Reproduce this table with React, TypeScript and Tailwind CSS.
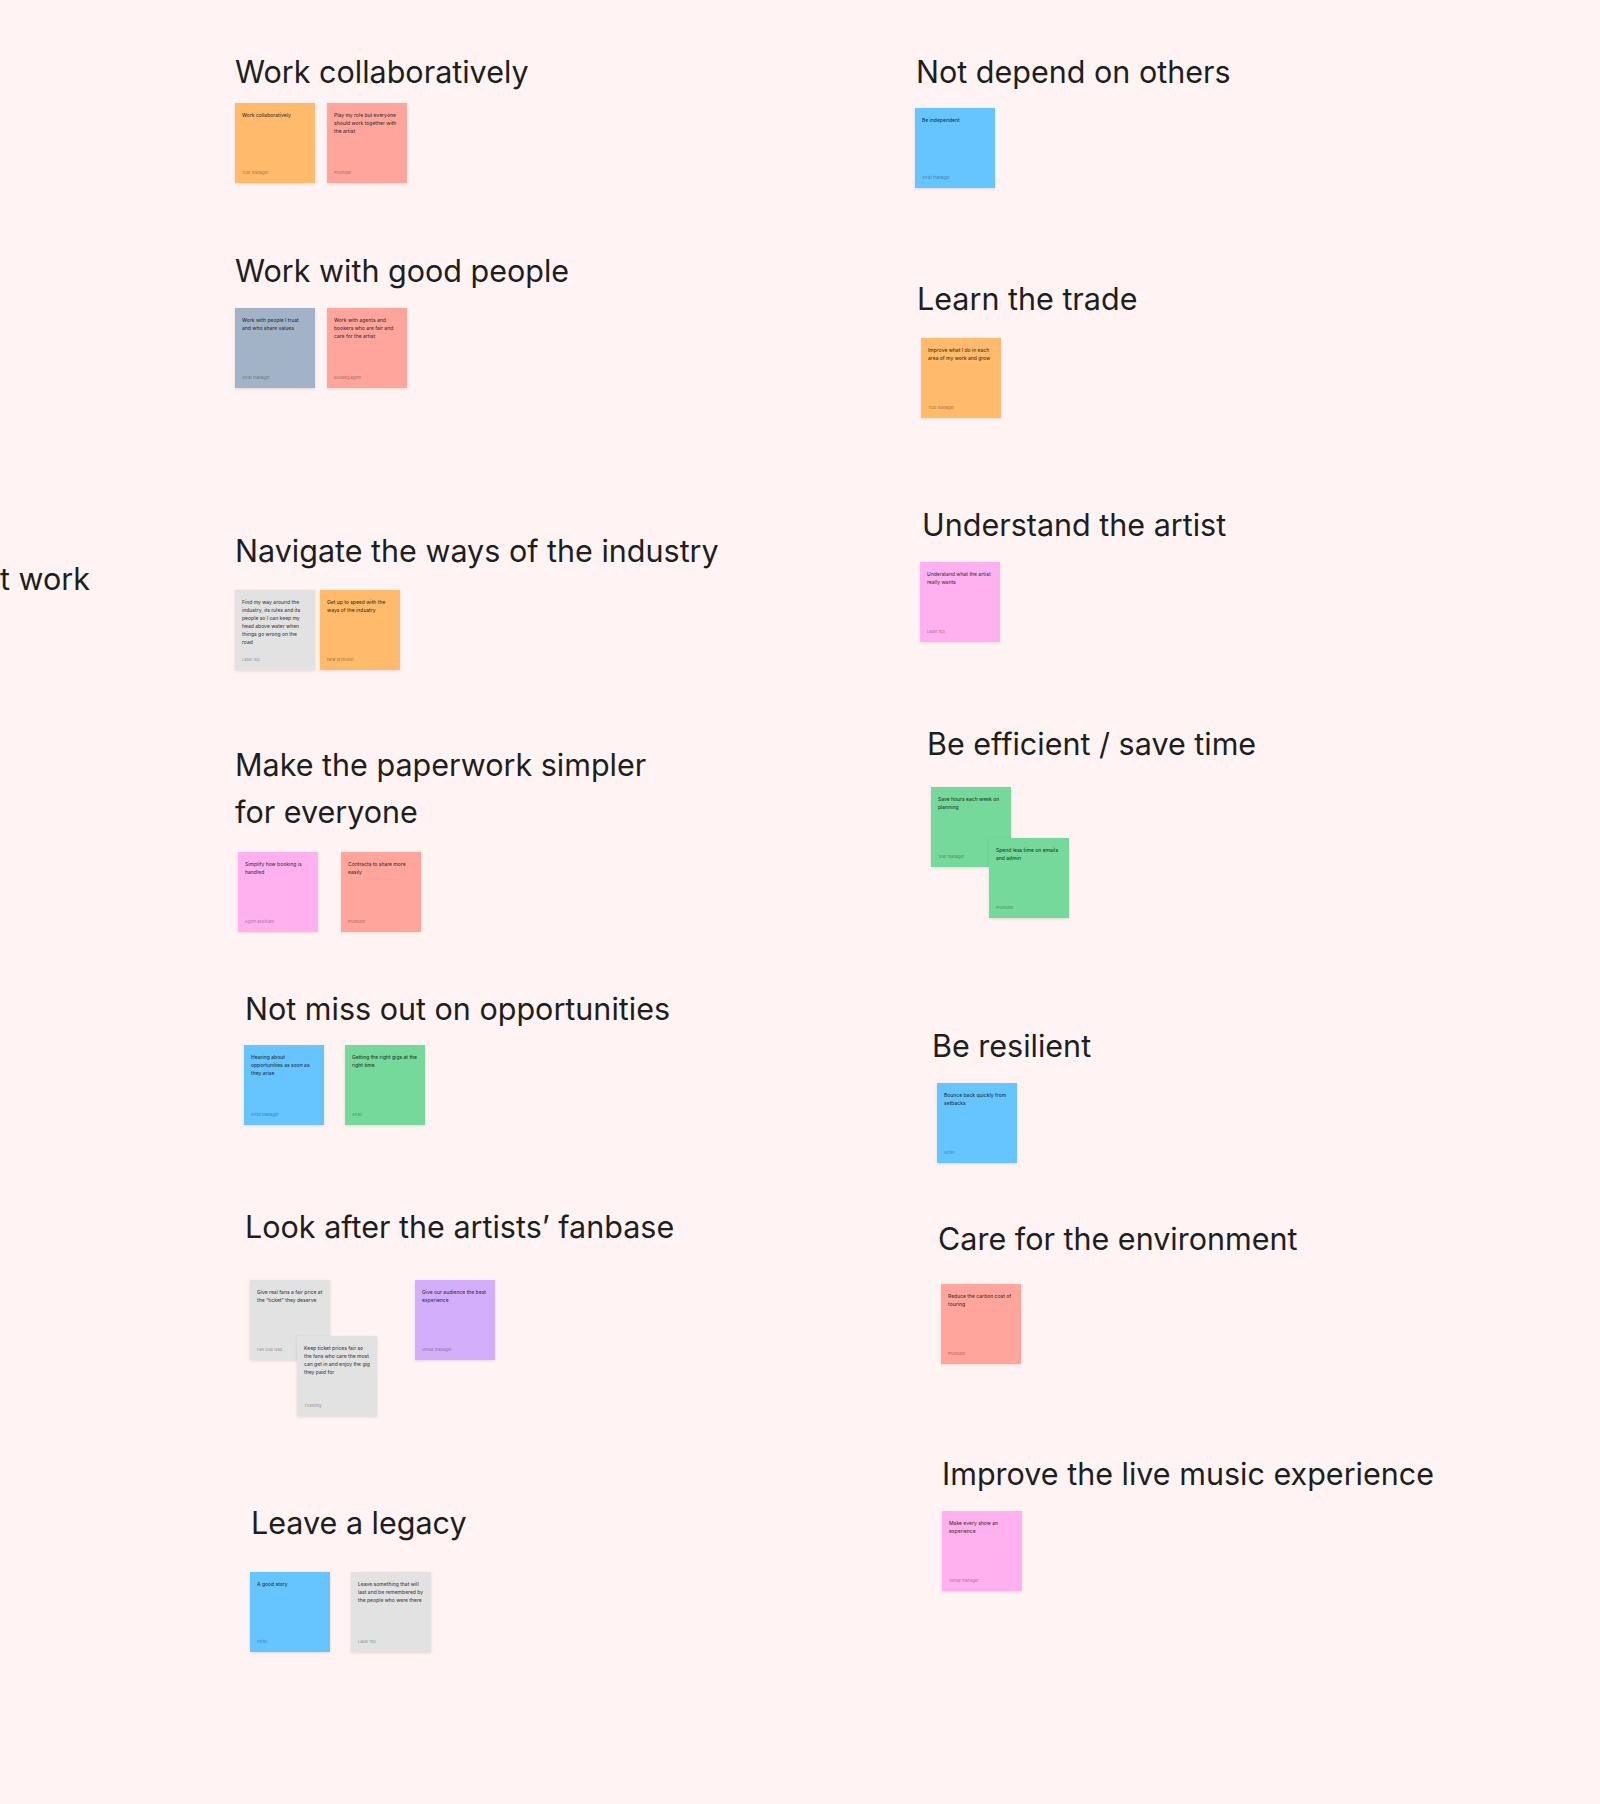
type Sticky = {
  color: string
  text: string
  author: string
  offset?: string
}

type Group = {
  pos: string
  title: string
  titleClass?: string
  cards: string
  stickies: Sticky[]
}

const groups: Group[] = [
  // left column
  {
    pos: 'left-[235px] top-[54px]',
    title: 'Work collaboratively',
    cards: 'mt-[13px] gap-[12px]',
    stickies: [
      { color: 'bg-[#ffba6b]', text: 'Work collaboratively', author: 'Tour manager' },
      { color: 'bg-[#ffa59b]', text: 'Play my role but everyone should work together with the artist', author: 'Promoter' },
    ],
  },
  {
    pos: 'left-[235px] top-[253px]',
    title: 'Work with good people',
    cards: 'mt-[19px] gap-[12px]',
    stickies: [
      { color: 'bg-[#a3b3c7]', text: 'Work with people I trust and who share values', author: 'Artist manager' },
      { color: 'bg-[#ffa59b]', text: 'Work with agents and bookers who are fair and care for the artist', author: 'Booking agent' },
    ],
  },
  {
    pos: 'left-[235px] top-[533px]',
    title: 'Navigate the ways of the industry',
    cards: 'mt-[21px] gap-[5px]',
    stickies: [
      { color: 'bg-[#e2e2e2]', text: 'Find my way around the industry, its rules and its people so I can keep my head above water when things go wrong on the road', author: 'Label rep' },
      { color: 'bg-[#ffba6b]', text: 'Get up to speed with the ways of the industry', author: 'New promoter' },
    ],
  },
  {
    pos: 'left-[235px] top-[741px]',
    title: 'Make the paperwork simpler for everyone',
    titleClass: 'w-[430px] leading-[47px]',
    cards: 'mt-[17px] ml-[3px] gap-[23px]',
    stickies: [
      { color: 'bg-[#ffb0ef]', text: 'Simplify how booking is handled', author: 'Agent assistant' },
      { color: 'bg-[#ffa59b]', text: 'Contracts to share more easily', author: 'Promoter' },
    ],
  },
  {
    pos: 'left-[245px] top-[991px]',
    title: 'Not miss out on opportunities',
    cards: 'mt-[18px] -ml-[1px] gap-[21px]',
    stickies: [
      { color: 'bg-[#66c4ff]', text: 'Hearing about opportunities as soon as they arise', author: 'Artist manager' },
      { color: 'bg-[#75d99b]', text: 'Getting the right gigs at the right time', author: 'Artist' },
    ],
  },
  {
    pos: 'left-[245px] top-[1209px]',
    title: 'Look after the artists’ fanbase',
    cards: 'mt-[35px] ml-[5px]',
    stickies: [
      { color: 'bg-[#e2e2e2]', text: 'Give real fans a fair price at the “ticket” they deserve', author: 'Fan club lead' },
      { color: 'bg-[#e2e2e2]', text: 'Keep ticket prices fair so the fans who care the most can get in and enjoy the gig they paid for', author: 'Ticketing', offset: '-ml-[33px] mt-[56px]' },
      { color: 'bg-[#d3affb]', text: 'Give our audience the best experience', author: 'Venue manager', offset: 'ml-[38px]' },
    ],
  },
  {
    pos: 'left-[251px] top-[1505px]',
    title: 'Leave a legacy',
    cards: 'mt-[31px] -ml-[1px] gap-[21px]',
    stickies: [
      { color: 'bg-[#66c4ff]', text: 'A good story', author: 'Artist' },
      { color: 'bg-[#e2e2e2]', text: 'Leave something that will last and be remembered by the people who were there', author: 'Label rep' },
    ],
  },
  // right column
  {
    pos: 'left-[916px] top-[54px]',
    title: 'Not depend on others',
    cards: 'mt-[18px] -ml-[1px]',
    stickies: [{ color: 'bg-[#66c4ff]', text: 'Be independent', author: 'Artist manager' }],
  },
  {
    pos: 'left-[917px] top-[281px]',
    title: 'Learn the trade',
    cards: 'mt-[21px] ml-[4px]',
    stickies: [{ color: 'bg-[#ffba6b]', text: 'Improve what I do in each area of my work and grow', author: 'Tour manager' }],
  },
  {
    pos: 'left-[922px] top-[507px]',
    title: 'Understand the artist',
    cards: 'mt-[19px] -ml-[2px]',
    stickies: [{ color: 'bg-[#ffb0ef]', text: 'Understand what the artist really wants', author: 'Label rep' }],
  },
  {
    pos: 'left-[927px] top-[726px]',
    title: 'Be efficient / save time',
    cards: 'mt-[25px] ml-[4px]',
    stickies: [
      { color: 'bg-[#75d99b]', text: 'Save hours each week on planning', author: 'Tour manager' },
      { color: 'bg-[#75d99b]', text: 'Spend less time on emails and admin', author: 'Promoter', offset: '-ml-[22px] mt-[51px]' },
    ],
  },
  {
    pos: 'left-[932px] top-[1028px]',
    title: 'Be resilient',
    cards: 'mt-[19px] ml-[5px]',
    stickies: [{ color: 'bg-[#66c4ff]', text: 'Bounce back quickly from setbacks', author: 'Artist' }],
  },
  {
    pos: 'left-[938px] top-[1221px]',
    title: 'Care for the environment',
    cards: 'mt-[27px] ml-[3px]',
    stickies: [{ color: 'bg-[#ffa59b]', text: 'Reduce the carbon cost of touring', author: 'Promoter' }],
  },
  {
    pos: 'left-[942px] top-[1456px]',
    title: 'Improve the live music experience',
    cards: 'mt-[19px]',
    stickies: [{ color: 'bg-[#ffb0ef]', text: 'Make every show an experience', author: 'Venue manager' }],
  },
]

function StickyNote({ sticky }: { sticky: Sticky }) {
  return (
    <div
      className={`${sticky.color} ${sticky.offset ?? ''} w-[80px] h-[80px] shrink-0 flex flex-col justify-between px-[7px] pt-[8px] pb-[7px] shadow-[0_1px_3px_rgba(0,0,0,0.12)]`}
    >
      <p className="text-[5px] leading-[8px] font-medium text-[#000000c0]">{sticky.text}</p>
      <p className="text-[4px] leading-[6px] text-[#00000073]">{sticky.author}</p>
    </div>
  )
}

export default function App() {
  return (
    <div
      className="relative w-full h-[1804px] overflow-hidden bg-[#fff4f3] text-[#1e1e1e]"
      style={{ fontFamily: 'Inter, "Noto Sans", sans-serif' }}
    >
      {/* cut-off section label from the neighbouring board */}
      <div className="absolute left-0 top-[561px] text-[30.5px] leading-[36px]">t work</div>

      {groups.map((group) => (
        <section key={group.title} className={`absolute ${group.pos}`}>
          <h2 className={`text-[30.5px] leading-[36px] font-normal ${group.titleClass ?? 'whitespace-nowrap'}`}>
            {group.title}
          </h2>
          <div className={`flex items-start ${group.cards}`}>
            {group.stickies.map((sticky, i) => (
              <StickyNote key={i} sticky={sticky} />
            ))}
          </div>
        </section>
      ))}
    </div>
  )
}
